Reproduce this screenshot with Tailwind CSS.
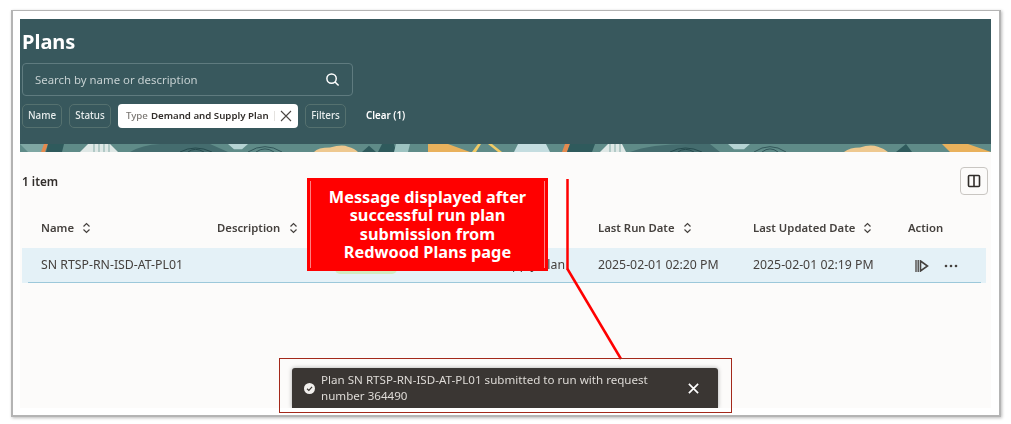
<!DOCTYPE html>
<html lang="en">

<head>
    <meta charset="UTF-8">
    <title>Plans</title>
    <script src="https://cdn.jsdelivr.net/npm/@tailwindcss/browser@4"></script>
</head>

<body class="bg-white w-[1011px] h-[424px] overflow-hidden relative font-['Noto_Sans',sans-serif]">
    <!-- screenshot frame -->
    <div class="ml-[11px] mt-[10px] w-[990px] h-[407px] border-2 border-t border-[#b4b4b4] shadow-[1px_1px_3px_#bbb] bg-white pl-[7px] pr-[8px] pt-[8px]">
        <div class="w-[971px] h-[389px] bg-[#fcfbfa] overflow-hidden relative blur-[0.35px]">

            <!-- header -->
            <header class="h-[133px] bg-[#38585d] flex flex-col">
                <h1 class="text-white font-bold text-[20px] leading-[28px] pl-[2px] pt-[9px]">Plans</h1>
                <div class="ml-[2px] mt-[7px] w-[331px] h-[33px] border border-[#5f7b7f] rounded-[4px] flex items-center justify-between pl-[12px] pr-[12px]">
                    <span class="text-[11.4px] text-[#c5d0d1]">Search by name or description</span>
                    <svg class="w-[15px] h-[15px]" viewBox="0 0 16 16" fill="none" stroke="#fff" stroke-width="1.6"><circle cx="7" cy="7" r="5"/><path d="M10.7 10.7 14.5 14.5"/></svg>
                </div>
                <div class="ml-[2px] mt-[8px] flex items-center h-[24px] text-[9.8px] font-medium text-[#e6ecec]">
                    <span class="h-full w-[40px] justify-center flex items-center border border-[#55716f] rounded-[5px]">Name</span>
                    <span class="ml-[7px] h-full w-[42px] justify-center flex items-center border border-[#55716f] rounded-[5px]">Status</span>
                    <span class="ml-[7px] h-full w-[180px] pl-[8px] flex items-center bg-white rounded-[4px] text-[#312d2a] whitespace-nowrap text-[9.7px]">
                        <span class="text-[#7b7773] mr-[3px]">Type</span><span class="font-semibold">Demand and Supply Plan</span>
                        <span class="w-[1px] h-[10px] bg-[#e4e2df] ml-[5px] shrink-0"></span>
                        <svg class="w-[12px] h-[12px] ml-[5px] shrink-0" viewBox="0 0 12 12" fill="none" stroke="#4a4643" stroke-width="1.1"><path d="M1 1 11 11M11 1 1 11"/></svg>
                    </span>
                    <span class="ml-[7px] h-full w-[41px] justify-center flex items-center border border-[#55716f] rounded-[5px]">Filters</span>
                    <span class="ml-[20px] font-semibold text-white">Clear (1)</span>
                </div>
                <!-- banner strip -->
                <svg class="mt-auto block w-[971px] h-[8px] shrink-0" viewBox="0 0 971 9" preserveAspectRatio="none">
                    <rect width="971" height="9" fill="#5f8b88"/>
                    <path d="M0 0H24V9H8Z" fill="#7fa7a3"/>
                    <path d="M24 0H28L25 9H21Z" fill="#e58a4e"/>
                    <path d="M28 0H44L42 9H26Z" fill="#2f5a5c"/>
                    <path d="M68 0H90L98 9H60Z" fill="#dfe8e6"/>
                    <path d="M74 0V9M79 0V9M84 0V9M89 0V9" stroke="#7fa7a3" stroke-width="1"/>
                    <path d="M110 9Q122 1 140 0H190L208 9Z" fill="#446c6e"/>
                    <path d="M160 9Q175 0 192 9M168 9Q175 3 184 9" fill="none" stroke="#24484b" stroke-width="1"/>
                    <path d="M208 0H228L222 6H214Z" fill="#b5d3d3"/>
                    <path d="M228 9Q245 -3 262 9M236 9Q245 2 254 9" fill="none" stroke="#2f5356" stroke-width="1"/>
                    <path d="M294 9Q298 4 310 4Q322 0 328 3Q335 5 338 9Z" fill="#eec88f"/>
                    <path d="M342 9 349 2 356 9Z" fill="#2f5a5c"/>
                    <path d="M362 0H374L376 9H358Z" fill="#2f5a5c"/>
                    <path d="M376 0H390L388 9H374Z" fill="#9dc3c1"/>
                    <path d="M408 0H428L450 9H408Z" fill="#e9b15c"/>
                    <path d="M452 9 458 0H461L456 9Z" fill="#f1cb67"/>
                    <path d="M468 0H472L482 9H478Z" fill="#f1cb67"/>
                    <path d="M498 0H526L530 9H494Z" fill="#c4dde0"/>
                    <path d="M545 0H550L547 9H542Z" fill="#e58a4e"/>
                    <path d="M550 0H575L572 9H547Z" fill="#2f5a5c"/>
                    <g transform="translate(550)">
                        <path d="M38 0H52L56 9H30Z" fill="#dfe8e6"/>
                        <path d="M40 0V9M45 0V9M50 0V9" stroke="#7fa7a3" stroke-width="1"/>
                        <path d="M60 9Q80 0 120 0H140L150 9Z" fill="#446c6e"/>
                        <path d="M100 9Q115 0 132 9M108 9Q115 3 124 9" fill="none" stroke="#24484b" stroke-width="1"/>
                        <path d="M158 0H180L174 6H164Z" fill="#b5d3d3"/>
                        <path d="M184 9Q200 -3 216 9M192 9Q200 2 208 9" fill="none" stroke="#2f5356" stroke-width="1"/>
                        <path d="M274 9Q280 4 290 4Q300 0 308 3Q314 5 318 9Z" fill="#eec88f"/>
                        <path d="M326 9 336 0 342 9Z" fill="#2f5a5c"/>
                        <path d="M372 0H398L421 9H380Z" fill="#e9b15c"/>
                    </g>
                </svg>
            </header>

            <!-- toolbar -->
            <div class="h-[42px] mt-[8px] flex items-center justify-between pl-[2px] pr-[3px]">
                <span class="text-[11.8px] font-semibold text-[#312d2a] relative top-[1px]">1 item</span>
                <span class="w-[28px] h-[28px] border border-[#c9c6c2] rounded-[4px] flex items-center justify-center">
                    <svg class="w-[14px] h-[14px]" viewBox="0 0 14 14" fill="none" stroke="#312d2a" stroke-width="1.6"><rect x="1.5" y="1.5" width="11" height="11" rx="1"/><path d="M7 1.5V12.5"/></svg>
                </span>
            </div>

            <!-- table -->
            <div class="mt-[13px] h-[26px] flex items-center text-[11.300px] font-semibold text-[#45413e] whitespace-nowrap">
                <span class="w-[197px] pl-[21px] flex items-center">Name<svg class="w-[9px] h-[12px] ml-[8px]" viewBox="0 0 9 12" fill="none" stroke="#45413e" stroke-width="1.2"><path d="M1.5 4.5 4.5 1.5 7.500 4.500M1.500 7.500 4.500 10.500 7.500 7.500"/></svg></span>
                <span class="w-[381px] flex items-center">Description<svg class="w-[9px] h-[12px] ml-[9px]" viewBox="0 0 9 12" fill="none" stroke="#45413e" stroke-width="1.2"><path d="M1.5 4.5 4.5 1.5 7.500 4.500M1.500 7.500 4.500 10.500 7.500 7.500"/></svg></span>
                <span class="w-[155px] flex items-center">Last Run Date<svg class="w-[9px] h-[12px] ml-[8px]" viewBox="0 0 9 12" fill="none" stroke="#45413e" stroke-width="1.2"><path d="M1.5 4.5 4.5 1.5 7.500 4.500M1.500 7.500 4.500 10.500 7.500 7.500"/></svg></span>
                <span class="w-[155px] flex items-center">Last Updated Date<svg class="w-[9px] h-[12px] ml-[8px]" viewBox="0 0 9 12" fill="none" stroke="#45413e" stroke-width="1.2"><path d="M1.5 4.5 4.500 1.500 7.500 4.500M1.500 7.500 4.500 10.500 7.500 7.500"/></svg></span>
                <span>Action</span>
            </div>
            <div class="ml-[2px] mr-[5px] mt-[7px] h-[35px] bg-[#e4f1f7] relative flex items-center text-[12.300px] text-[#45413e] whitespace-nowrap">
                <span class="w-[195px] pl-[19px]">SN RTSP-RN-ISD-AT-PL01</span>
                <span class="w-[118px]"></span>
                <span class="w-[80px]"><span class="block w-[62px] h-[17px] rounded-[5px] bg-[#d2ebc2]"></span></span>
                <span class="w-[183px] text-right pr-[33px] box-border">Demand and Supply Plan</span>
                <span class="w-[155px]">2025-02-01 02:20 PM</span>
                <span class="w-[155px]">2025-02-01 02:19 PM</span>
                <span class="flex items-center pl-[7px]">
                    <svg class="w-[14px] h-[12px]" viewBox="0 0 14 12" fill="none" stroke="#45413e"><path d="M1 0V12M3.200 0V12" stroke-width="1.300"/><path d="M5.500 1 12.500 6 5.500 11Z" stroke-width="1.600"/></svg>
                    <svg class="w-[14px] h-[4px] ml-[15px]" viewBox="0 0 14 4" fill="#45413e"><circle cx="2" cy="2" r="1.300"/><circle cx="7" cy="2" r="1.300"/><circle cx="12" cy="2" r="1.300"/></svg>
                </span>
                <div class="absolute left-[6px] right-[5px] bottom-0 h-[1px] bg-[#9cc8da]"></div>
            </div>

            <!-- toast -->
            <div class="absolute left-[272px] top-[349px] w-[426px] h-[40px] bg-[#3a3633] rounded-t-[3px] flex items-center pl-[12px] pr-[19px] shadow-[0_0_4px_#aaa]">
                <svg class="w-[11px] h-[11px] shrink-0" viewBox="0 0 12 12"><circle cx="6" cy="6" r="6" fill="#f1efed"/><path d="M3.300 6.200 5.300 8 8.800 4.300" fill="none" stroke="#3a3633" stroke-width="1.300"/></svg>
                <p class="ml-[6px] w-[345px] text-[11.600px] leading-[16px] text-[#dedbd7]">Plan SN RTSP-RN-ISD-AT-PL01 submitted to run with request number 364490</p>
                <svg class="w-[11px] h-[11px] ml-auto" viewBox="0 0 10 10" fill="none" stroke="#fff" stroke-width="1.500"><path d="M.8.8 9.200 9.200M9.200.8.800 9.200"/></svg>
            </div>
        </div>
    </div>

    <!-- annotations over the screenshot -->
    <div class="absolute left-[307px] top-[178px] w-[241px] h-[93px] bg-[#ff0000] px-[3px] py-[3px]">
        <div class="h-full border-x border-white/50 flex items-center justify-center text-center text-white font-bold text-[16.300px] leading-[18.400px] whitespace-nowrap">
            <p>Message displayed after<br>successful run plan<br>submission from<br>Redwood Plans page</p>
        </div>
    </div>
    <svg class="absolute left-0 top-0 w-[1011px] h-[424px] pointer-events-none" viewBox="0 0 1011 424" fill="none" stroke="#f00" stroke-width="2.500">
        <path d="M567.500 179V270"/>
        <path d="M567.500 269 621 359"/>
    </svg>
    <div class="absolute left-[279px] top-[358px] w-[453px] h-[55px] border border-[#a3281a]"></div>
</body>

</html>
